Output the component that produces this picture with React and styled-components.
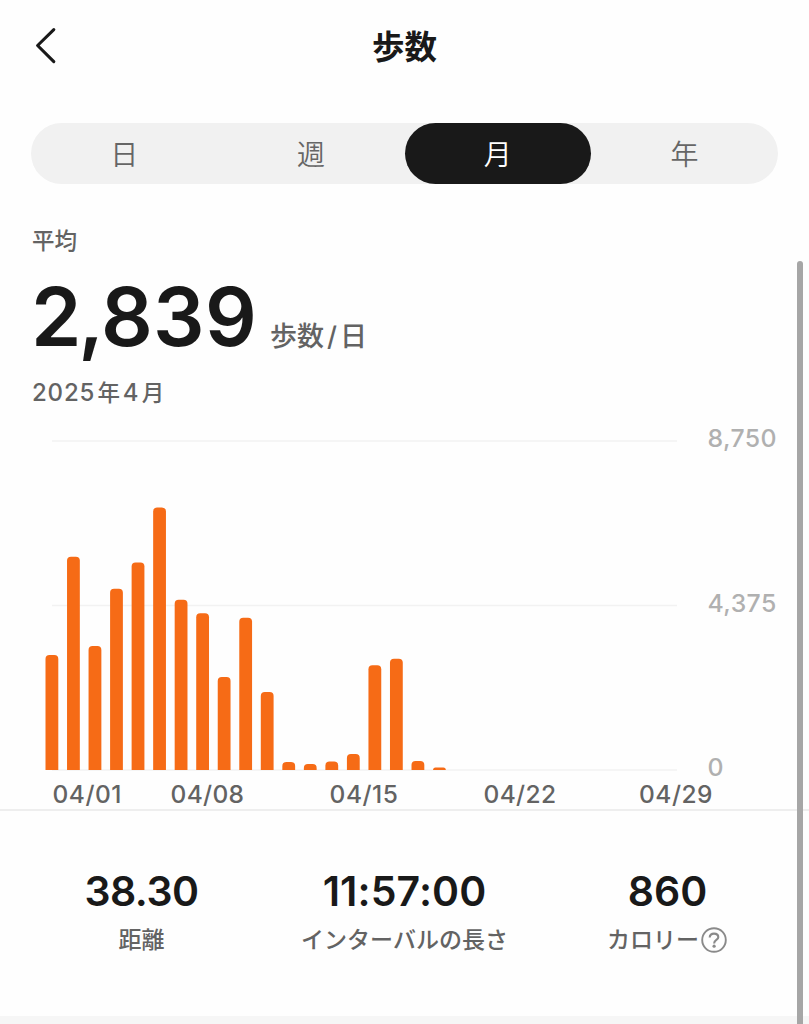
import React, { useState } from "react";
import styled, { createGlobalStyle } from "styled-components";

const tabs = ["日", "週", "月", "年"];

// y of the top of every bar, the base line is at 342
const bars = [
  227, 128.7, 218, 160.7, 134.5, 79.5, 171.7, 185.2, 249, 189.8,
  264, 334, 336, 333.5, 326, 237.2, 230.7, 333, 339.5,
];

const dates = [
  { x: 52.5, text: "04/01", width: 69 },
  { x: 170.5, text: "04/08", width: 73.5 },
  { x: 329.5, text: "04/15", width: 68.5 },
  { x: 483.5, text: "04/22", width: 72.5 },
  { x: 639, text: "04/29", width: 73.5 },
];

const scale = [
  { y: 13, text: "8,750" },
  { y: 177.5, text: "4,375" },
  { y: 342, text: "0" },
];

const barPath = (x, top) => {
  const r = Math.min(4, 342 - top);
  return `M${x} 342V${top + r}q0 ${-r} ${r} ${-r}h${12.8 - r * 2}q${r} 0 ${r} ${r}V342z`;
};

const App = () => {
  const [tab, setTab] = useState("月");

  return (
    <Page>
      <GlobalStyle />
      <Header>
        <BackButton aria-label="戻る">
          <svg width="24" height="40" viewBox="0 0 24 40" fill="none">
            <path d="M20.8 3.7L4.6 19.5L20.8 35.7" stroke="#191919" strokeWidth="3.1" strokeLinecap="round" strokeLinejoin="round" />
          </svg>
        </BackButton>
        <Title>歩数</Title>
      </Header>
      <TabBar>
        {tabs.map((name) => (
          <Tab key={name} $active={name === tab} onClick={() => setTab(name)}>
            {name}
          </Tab>
        ))}
      </TabBar>
      <Summary>
        <SmallText>平均</SmallText>
        <AverageRow>
          <Average><Thousands>2,</Thousands>839</Average>
          <Unit>歩数<Slash>/</Slash>日</Unit>
        </AverageRow>
        <MonthText>
          2025<Kanji>年</Kanji>4<Kanji>月</Kanji>
        </MonthText>
      </Summary>
      <Chart viewBox="0 -18 809 399">
        {scale.map(({ y, text }) => (
          <g key={text}>
            <line x1="52" x2="677" y1={y} y2={y} stroke="#f2f2f2" strokeWidth="1.4" />
            <ScaleText x="707.5" y={y + 6.4}>{text}</ScaleText>
          </g>
        ))}
        {bars.map((top, i) => (
          <path key={i} d={barPath(45.5 + i * 21.53, top)} fill="#f66b16" />
        ))}
        {dates.map(({ x, text, width }) => (
          <DateText key={text} x={x} y="374.8" textLength={width}>{text}</DateText>
        ))}
      </Chart>
      <Stats>
        <Stat>
          <StatValue $spacing="-0.5px">38.30</StatValue>
          <StatLabel>距離</StatLabel>
        </Stat>
        <Stat>
          <StatValue $spacing="0.1px">11:57:00</StatValue>
          <StatLabel>インターバルの長さ</StatLabel>
        </Stat>
        <Stat>
          <StatValue>860</StatValue>
          <StatLabel>
            カロリー
            <HelpIcon viewBox="0 0 26 26">
              <circle cx="13" cy="13" r="11.8" />
              <path d="M8.7 10.5C8.7 8 10.5 6.6 13 6.6C15.5 6.6 17.3 8.1 17.3 10.2C17.3 13 13.1 12.9 13.1 16.4" strokeWidth="2.1" />
              <circle cx="13.1" cy="19.2" r="1.6" fill="#8a8a8a" stroke="none" />
            </HelpIcon>
          </StatLabel>
        </Stat>
      </Stats>
      <NextSection />
      <ScrollBar />
    </Page>
  );
};

export default App;

const GlobalStyle = createGlobalStyle`
  body {
    margin: 0;
    background: #fefefe;
    overflow: hidden;
  }
  * {
    box-sizing: border-box;
  }
`;

const Page = styled.div`
  position: relative;
  display: flex;
  flex-direction: column;
  width: 809px;
  height: 1024px;
  overflow: hidden;
  background: #fefefe;
  color: #191919;
  font-family: Inter, "Noto Sans CJK JP", sans-serif;
`;

const Header = styled.header`
  display: grid;
  grid-template-columns: 60px 1fr 60px;
  align-items: center;
  height: 92px;
  flex-shrink: 0;
`;

const BackButton = styled.button`
  display: flex;
  padding: 0 0 1px 33px;
  border: none;
  background: none;
  cursor: pointer;
`;

const Title = styled.h1`
  margin: 0;
  padding-top: 3px;
  text-align: center;
  font-size: 32.5px;
  line-height: 48px;
  font-weight: 700;
`;

const TabBar = styled.nav`
  display: grid;
  grid-template-columns: repeat(4, 1fr);
  height: 61px;
  flex-shrink: 0;
  margin: 31px 31px 0;
  border-radius: 31px;
  background: #f1f1f1;
`;

const Tab = styled.button`
  padding: 0 0 1px;
  border: none;
  border-radius: 31px;
  background: ${({ $active }) => ($active ? "#191919" : "transparent")};
  color: ${({ $active }) => ($active ? "#ffffff" : "#666666")};
  font-family: "Noto Sans CJK JP", sans-serif;
  font-size: 28px;
  font-weight: 350;
  line-height: 60px;
  cursor: pointer;
`;

const Summary = styled.section`
  display: flex;
  flex-direction: column;
  height: 226px;
  flex-shrink: 0;
  padding: 41px 32px 0;
  color: #636363;
`;

const SmallText = styled.div`
  font-size: 22.5px;
  font-weight: 500;
  line-height: 32px;
`;

const AverageRow = styled.div`
  display: flex;
  align-items: baseline;
  gap: 13px;
  height: 119px;
`;

const Average = styled.div`
  margin-left: -1px;
  color: #191919;
  font-size: 81px;
  font-weight: 600;
  line-height: 120px;
  letter-spacing: 0.3px;
`;

const Thousands = styled.span`
  letter-spacing: -3.2px;
`;

const Unit = styled.div`
  font-size: 27px;
  font-weight: 500;
`;

const Slash = styled.span`
  margin: 0 3px;
`;

const MonthText = styled.div`
  font-size: 24px;
  font-weight: 500;
  line-height: 34px;
  letter-spacing: 0.8px;
`;

const Kanji = styled.span`
  margin: 0 2.5px;
  font-size: 22.5px;
  letter-spacing: 0;
`;

const Chart = styled.svg`
  display: block;
  width: 809px;
  height: 399px;
  flex-shrink: 0;
`;

const ScaleText = styled.text`
  fill: #b0b0b0;
  font-size: 24.8px;
  font-weight: 500;
  letter-spacing: 0.4px;
`;

const DateText = styled.text`
  fill: #636363;
  font-size: 24.5px;
  font-weight: 500;
`;

const Stats = styled.section`
  display: grid;
  grid-template-columns: repeat(3, 263px);
  justify-content: center;
  height: 207px;
  flex-shrink: 0;
  padding-top: 53px;
  border-top: 2px solid #eeeeee;
`;

const Stat = styled.div`
  display: flex;
  flex-direction: column;
  align-items: center;
`;

const StatValue = styled.div`
  font-size: 41px;
  font-weight: 600;
  line-height: 54px;
  letter-spacing: ${({ $spacing }) => $spacing || "0"};
`;

const StatLabel = styled.div`
  display: flex;
  align-items: center;
  color: #636363;
  font-size: 23px;
  font-weight: 500;
  line-height: 45px;
`;

const HelpIcon = styled.svg`
  width: 26px;
  height: 26px;
  margin: 0 1px 2px 2px;
  fill: none;
  stroke: #8a8a8a;
  stroke-width: 1.9;
`;

const NextSection = styled.div`
  flex: 1;
  background: #f6f6f6;
`;

const ScrollBar = styled.div`
  position: absolute;
  top: 261px;
  right: 6px;
  bottom: -6px;
  width: 6px;
  border-radius: 3px;
  background: #a6a6a6;
`;
